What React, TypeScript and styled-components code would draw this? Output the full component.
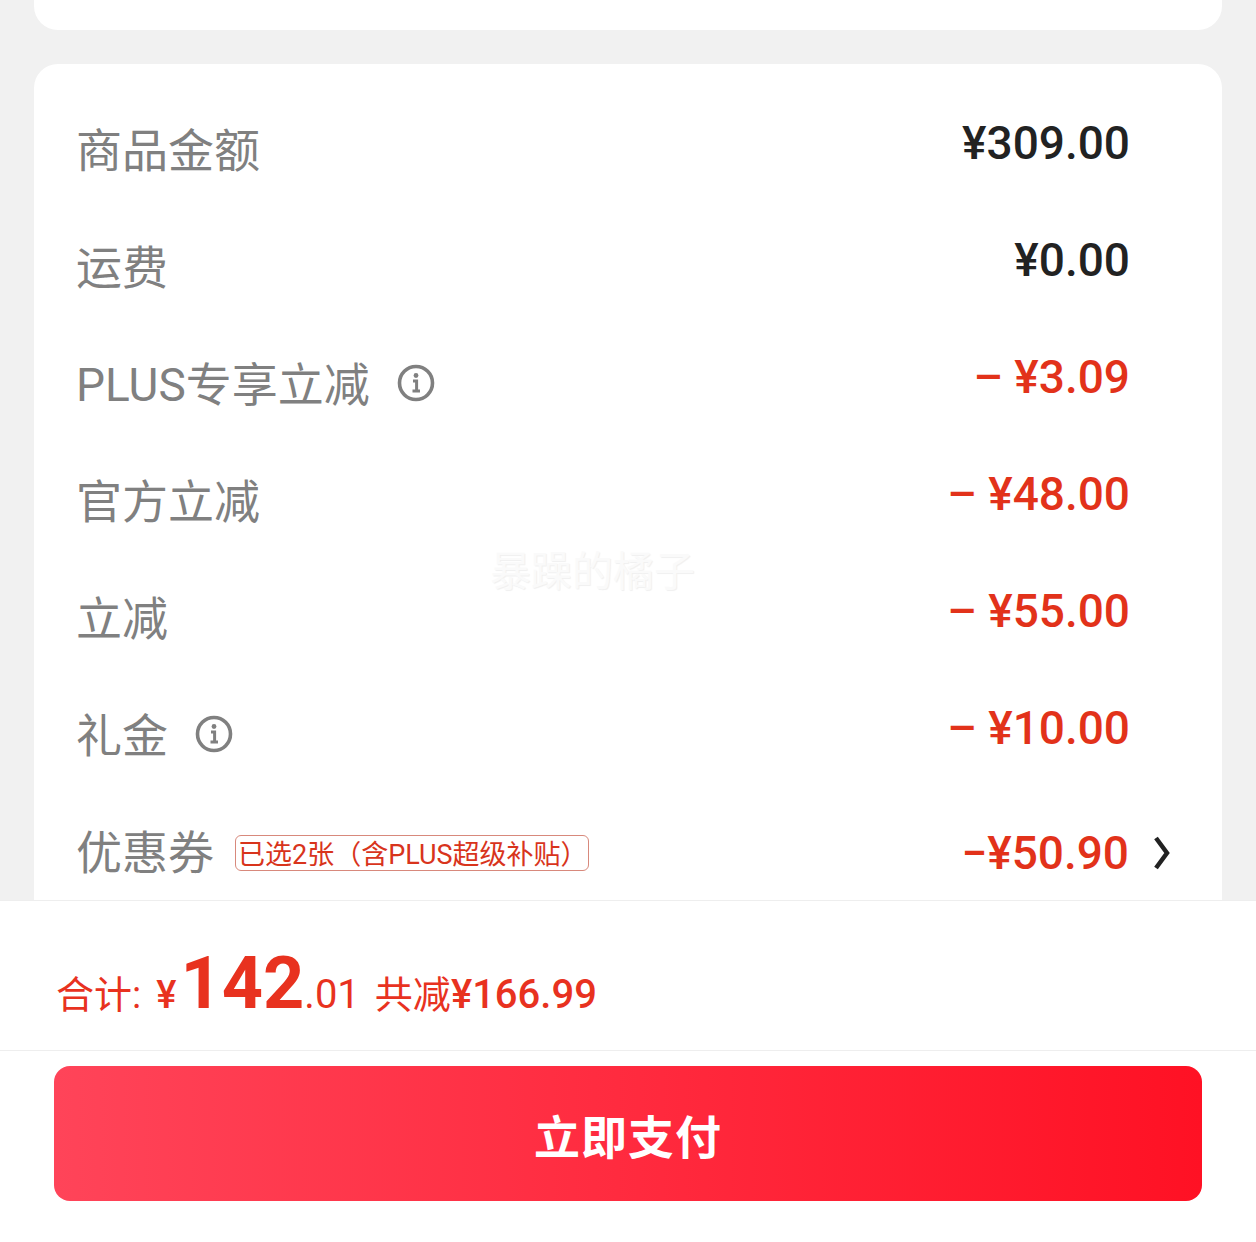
import React, {FC} from 'react';
import styled, {createGlobalStyle} from "styled-components";

const GlobalStyle = createGlobalStyle`
  html, body {
    margin: 0;
    padding: 0;
    background: #fff;
    font-family: Roboto, "Noto Sans CJK SC", sans-serif;
  }
`

const Page = styled.div`
  width: 1256px;
  height: 1242px;
  display: flex;
  flex-direction: column;
  overflow: hidden;
  background: #fff;
`
const ScrollArea = styled.div`
  position: relative;
  height: 900px;
  flex-shrink: 0;
  overflow: hidden;
  background: #f1f1f1;
  padding: 0 34px;
  box-sizing: border-box;
`
const TopCard = styled.div`
  height: 30px;
  margin-bottom: 34px;
  background: #fff;
  border-radius: 0 0 24px 24px;
`
const Card = styled.div`
  background: #fff;
  border-radius: 24px 24px 0 0;
  padding: 28px 50px 0 42px;
  height: 900px;
  box-sizing: border-box;
`
const Row = styled.div`
  height: 117px;
  display: flex;
  align-items: center;
  justify-content: space-between;
`
const LabelGroup = styled.div`
  display: flex;
  align-items: center;
`
const Label = styled.span`
  font-size: 46px;
  line-height: 60px;
  color: #808080;
`
const InfoIcon = styled.svg`
  width: 40px;
  height: 40px;
  margin-left: 26px;
  margin-top: -4px;
`
const Tag = styled.span`
  margin-left: 21px;
  height: 36px;
  width: 354px;
  box-sizing: border-box;
  display: flex;
  align-items: center;
  padding-left: 2px;
  border: 1px solid #d8897c;
  border-radius: 6px;
  font-size: 27px;
  color: #d8341c;
  white-space: nowrap;
`
const ValueGroup = styled.div<{$chevron?: boolean}>`
  display: flex;
  align-items: center;
  margin-top: ${p => p.$chevron ? "0" : "-16px"};
  margin-right: ${p => p.$chevron ? "0" : "42px"};
`
const Value = styled.span<{$red?: boolean}>`
  font-size: 46px;
  line-height: 60px;
  font-weight: 500;
  white-space: pre;
  color: ${p => p.$red ? "#e2321a" : "#222"};
`
const Chevron = styled.svg`
  width: 20px;
  height: 36px;
  margin-left: 23px;
`
const Watermark = styled.span`
  position: absolute;
  left: 490px;
  top: 546px;
  font-size: 41px;
  line-height: 52px;
  color: #fafafa;
  text-shadow: 1px 1px 1px #f0f0f0;
  white-space: nowrap;
`
const TotalBar = styled.div`
  height: 151px;
  flex-shrink: 0;
  box-sizing: border-box;
  border-top: 1px solid #eeeeee;
  border-bottom: 1px solid #eeeeee;
  padding: 0 0 0 56px;
  display: flex;
  align-items: baseline;
  line-height: 166px;
  color: #e8321f;
  white-space: pre;
`
const TotalLabel = styled.span`
  font-size: 38px;
`
const Yen = styled.span`
  font-size: 38px;
  font-weight: 500;
  margin-left: 15px;
`
const BigPrice = styled.span`
  font-family: "Liberation Sans Narrow", Roboto, sans-serif;
  font-size: 72px;
  font-weight: 700;
  margin-left: 4px;
`
const Cents = styled.span`
  font-family: "Liberation Sans Narrow", Roboto, sans-serif;
  font-size: 40px;
`
const Saved = styled.span`
  font-size: 38px;
  margin-left: 15px;
`
const SavedAmount = styled.span`
  font-size: 40px;
  font-weight: 500;
`
const ButtonBar = styled.div`
  padding: 15px 54px 0;
`
const PayButton = styled.button`
  display: block;
  width: 100%;
  height: 135px;
  border: none;
  border-radius: 16px;
  background: linear-gradient(90deg, #ff4459 0%, #ff1124 100%);
  color: #fff;
  font: inherit;
  font-size: 46px;
  font-weight: 700;
  letter-spacing: 1px;
`

const Info: FC = () => (
    <InfoIcon viewBox="0 0 40 40">
        <circle cx="20" cy="20" r="16.5" fill="none" stroke="#808080" strokeWidth="3.6"/>
        <circle cx="20" cy="12.5" r="2.4" fill="#808080"/>
        <path d="M17 18h3.6v10M16.5 28h7.5" fill="none" stroke="#808080" strokeWidth="3"/>
    </InfoIcon>
)

const rows = [
    {label: "商品金额", value: "¥309.00"},
    {label: "运费", value: "¥0.00"},
    {label: "PLUS专享立减", value: "– ¥3.09", red: true, info: true},
    {label: "官方立减", value: "– ¥48.00", red: true},
    {label: "立减", value: "– ¥55.00", red: true},
    {label: "礼金", value: "– ¥10.00", red: true, info: true},
]

export default function App() {
    return (
        <Page>
            <GlobalStyle/>
            <ScrollArea>
                <TopCard/>
                <Card>
                    {rows.map(r => (
                        <Row key={r.label}>
                            <LabelGroup>
                                <Label>{r.label}</Label>
                                {r.info && <Info/>}
                            </LabelGroup>
                            <ValueGroup>
                                <Value $red={r.red}>{r.value}</Value>
                            </ValueGroup>
                        </Row>
                    ))}
                    <Row>
                        <LabelGroup>
                            <Label>优惠券</Label>
                            <Tag>已选2张（含PLUS超级补贴）</Tag>
                        </LabelGroup>
                        <ValueGroup $chevron>
                            <Value $red>−¥50.90</Value>
                            <Chevron viewBox="0 0 20 36">
                                <path d="M4 3l11 15L4 33" fill="none" stroke="#222" strokeWidth="4.5"/>
                            </Chevron>
                        </ValueGroup>
                    </Row>
                </Card>
                <Watermark>暴躁的橘子</Watermark>
            </ScrollArea>
            <TotalBar>
                <TotalLabel>合计:</TotalLabel>
                <Yen>¥</Yen>
                <BigPrice>142</BigPrice>
                <Cents>.01</Cents>
                <Saved>共减</Saved>
                <SavedAmount>¥166.99</SavedAmount>
            </TotalBar>
            <ButtonBar>
                <PayButton>立即支付</PayButton>
            </ButtonBar>
        </Page>
    );
}
